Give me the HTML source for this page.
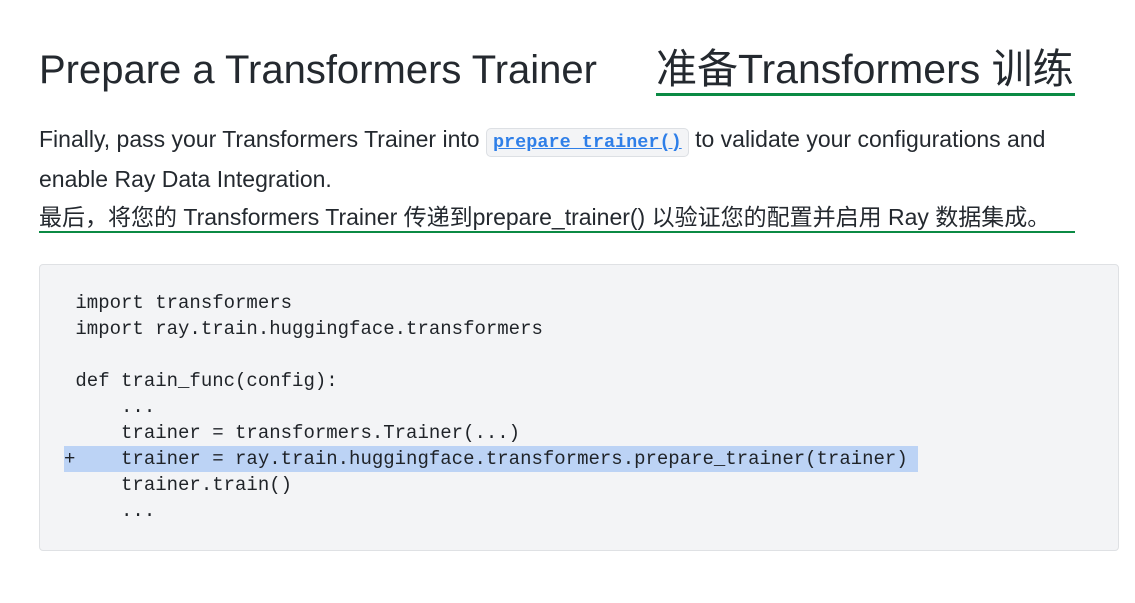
<!DOCTYPE html>
<html><head><meta charset="utf-8"><style>
body{margin:0;width:1135px;height:603px;background:#fff;overflow:hidden;position:relative;font-family:"Liberation Sans","Noto Sans CJK SC",sans-serif;color:#24292f}
.a{position:absolute;white-space:nowrap}
h1{margin:0;font-weight:normal;font-size:40px}
.ul{border-bottom:3px solid #0b8a44}
.p{font-size:23px}
code.i{font-family:"Liberation Mono",monospace;font-size:18.5px;font-weight:bold;color:#2f7fe8;text-decoration:underline;background:#f3f4f6;border:1px solid #dde0e4;border-radius:5px;padding:3px 6px}
.code{position:absolute;left:39px;top:264px;width:1078px;height:285px;background:#f3f4f6;border:1px solid #dfe1e4;border-radius:4px}
pre{margin:0;position:absolute;left:64px;top:290px;font-family:"Liberation Mono",monospace;font-size:19px;line-height:26px;color:#1f2328}
.hl{background:#bcd3f5;display:inline-block;width:854px}
</style></head><body>
<h1 class="a" style="left:39px;top:48px">Prepare a Transformers Trainer</h1>
<h1 class="a ul" style="left:656px;top:46px;line-height:47px;width:419px;font-size:41px">准备Transformers 训练</h1>
<div class="a p" style="left:39px;top:126px">Finally, pass your Transformers Trainer into <code class="i">prepare_trainer()</code> to validate your configurations and</div>
<div class="a p" style="left:39px;top:166px">enable Ray Data Integration.</div>
<div class="a p ul" style="left:39px;top:204px;width:1036px;line-height:27px;border-bottom-width:2px">最后，将您的 Transformers Trainer 传递到prepare_trainer() 以验证您的配置并启用 Ray 数据集成。</div>
<div class="code"></div>
<pre> import transformers
 import ray.train.huggingface.transformers

 def train_func(config):
     ...
     trainer = transformers.Trainer(...)
<span class="hl">+    trainer = ray.train.huggingface.transformers.prepare_trainer(trainer)</span>
     trainer.train()
     ...</pre>
</body></html>
